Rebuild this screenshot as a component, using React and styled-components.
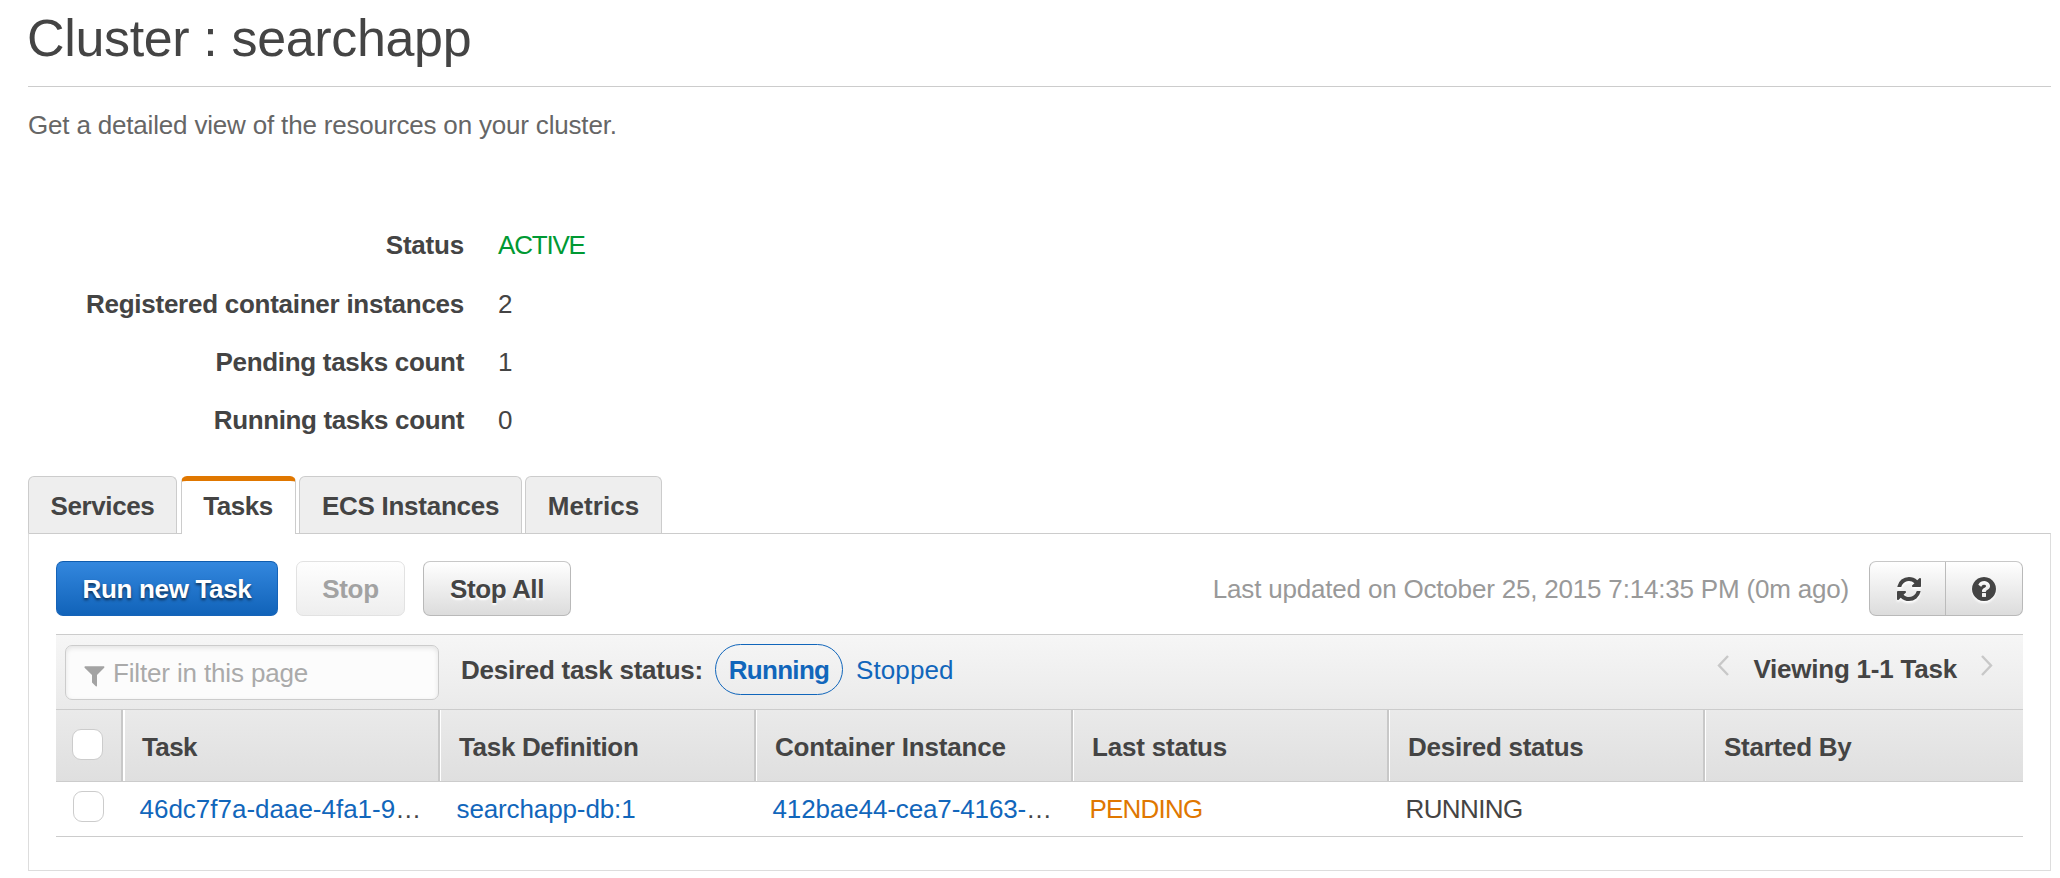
import React from 'react';
import styled, { createGlobalStyle, css } from 'styled-components';

const Global = createGlobalStyle`
  * { box-sizing: border-box; }
  body {
    margin: 0;
    background: #fff;
    color: #444;
    font: 26px/30px "Liberation Sans", Arial, sans-serif;
    white-space: nowrap;
  }
`;

const Page = styled.main`
  padding: 8px 9px 7px 28px;
`;

const Title = styled.h1`
  margin: 0;
  height: 79px;
  border-bottom: 1px solid #ccc;
  font-size: 52px;
  line-height: 60px;
  font-weight: 400;
  letter-spacing: -0.35px;
  text-indent: -1px;
`;

const Intro = styled.p`
  margin: 23px 0 0;
  color: #666;
  letter-spacing: -0.18px;
`;

const Details = styled.dl`
  display: grid;
  grid-template-columns: 436px 1fr;
  grid-template-rows: 59px 58px 58px 71px;
  column-gap: 34px;
  margin: 90px 0 0;
`;

const Label = styled.dt`
  font-weight: 700;
  text-align: right;
  letter-spacing: ${(p) => p.$ls}px;
`;

const Value = styled.dd`
  margin: 0;
  color: ${(p) => (p.$ok ? '#093' : '#444')};
  letter-spacing: ${(p) => (p.$ok ? '-1.2px' : 'normal')};
`;

const Tabs = styled.nav`
  display: flex;
  gap: 3px;
`;

const Tab = styled.div`
  width: ${(p) => p.$w}px;
  height: 57px;
  padding-top: 14px;
  border: 1px solid #ccc;
  border-bottom: 0;
  border-radius: 6px 6px 0 0;
  background: #eee;
  font-weight: 700;
  text-align: center;
  letter-spacing: ${(p) => p.$ls}px;
  ${(p) =>
    p.$active &&
    css`
      position: relative;
      height: 58px;
      margin: 0 0 -1px 1px;
      padding: 10px 1px 0 0;
      border-top: 5px solid #e07700;
      background: #fff;
    `}
`;

const Panel = styled.section`
  height: 338px;
  padding: 27px;
  border: 1px solid #ddd;
  border-top-color: #ccc;
`;

const Actions = styled.div`
  display: flex;
  align-items: flex-start;
  gap: 18px;
  margin-bottom: 18px;
`;

const variants = {
  primary: css`
    border-color: #1563b8;
    border-top-color: #0f5cae;
    background: linear-gradient(#3387de, #1163b9);
    color: #fff;
    text-shadow: 0 2px 3px rgba(0, 0, 0, 0.6);
  `,
  plain: css`
    border-color: #b9b9b9;
    border-top-color: #c8c8c8;
    background: linear-gradient(#fff, #dcdcdc);
    color: #444;
    text-shadow: 0 2px 2px #fff;
  `,
  disabled: css`
    border-color: #e2e2e2;
    background: linear-gradient(#fefefe, #eee);
    color: #a2a2a2;
  `,
};

const Button = styled.button`
  width: ${(p) => p.$w}px;
  height: 55px;
  padding: 12px 0 11px;
  border: 1px solid;
  border-radius: 7px;
  font: inherit;
  font-weight: 700;
  letter-spacing: ${(p) => p.$ls}px;
  ${(p) => variants[p.$variant]}
`;

const Updated = styled.span`
  margin: 13px 2px 0 auto;
  color: #999;
  letter-spacing: -0.19px;
`;

const IconGroup = styled.div`
  display: flex;
  width: 154px;
  height: 55px;
  border: 1px solid #b9b9b9;
  border-top-color: #c8c8c8;
  border-radius: 7px;
  background: linear-gradient(#fff, #dcdcdc);
`;

const IconButton = styled.button`
  width: 75px;
  display: flex;
  justify-content: center;
  padding: 15px 0 0 2px;
  border: 0;
  background: none;
  color: #444;
  & + & {
    width: 77px;
    padding-left: 0;
    border-left: 1px solid #bbb;
  }
  svg { filter: drop-shadow(0 2px 1px #fff); }
`;

const FilterBar = styled.div`
  display: flex;
  align-items: flex-start;
  height: 75px;
  padding-left: 9px;
  border-top: 1px solid #ccc;
  background: linear-gradient(#f6f6f6, #eaeaea);
`;

const FilterBox = styled.div`
  display: flex;
  width: 374px;
  height: 55px;
  margin-top: 10px;
  padding: 12px 0 0 18px;
  border: 1px solid #ccc;
  border-radius: 7px;
  background: #fcfcfc;
  box-shadow: inset 0 2px 5px rgba(0, 0, 0, 0.1);
  color: #aaa;
  letter-spacing: -0.15px;
  svg { margin: 8px 8px 0 0; }
`;

const StatusLabel = styled.span`
  width: 254px;
  margin: 20px 0 0 22px;
  font-weight: 700;
  letter-spacing: -0.26px;
`;

const Pill = styled.span`
  width: 128px;
  height: 51px;
  margin-top: 9px;
  padding-top: 10px;
  border: 1px solid #1166bb;
  border-radius: 26px;
  color: #1166bb;
  font-weight: 700;
  text-align: center;
  letter-spacing: -0.7px;
`;

const StatusLink = styled.span`
  margin: 20px 0 0 13px;
  color: #1166bb;
  letter-spacing: 0.1px;
`;

const Pager = styled.div`
  display: flex;
  gap: 24px;
  margin: 19px 30px 0 auto;
  font-weight: 700;
  letter-spacing: -0.22px;
  svg { margin-top: 1px; }
`;

const grid = css`
  display: grid;
  grid-template-columns: 67px 317px 316px 317px 316px 316px 1fr;
`;

const HeadRow = styled.div`
  ${grid}
  height: 73px;
  border: solid #ccc;
  border-width: 1px 0;
  background: linear-gradient(#eaeaea, #dfdfdf);
`;

const HeadCell = styled.div`
  padding: 22px 0 0 18px;
  border-left: 1px solid #fff;
  border-right: 2px solid #c8c8c8;
  font-weight: 700;
  letter-spacing: ${(p) => p.$ls}px;
  &:first-child { padding: 19px 0 0 16px; border-left: 0; }
  &:nth-child(2) { padding-left: 17px; border-left-width: 2px; }
  &:last-child { border-right: 0; }
`;

const Row = styled.div`
  ${grid}
  height: 55px;
  border-bottom: 1px solid #ccc;
`;

const Cell = styled.div`
  padding: 12px 0 0 16.5px;
  color: ${(p) => (p.$warn ? '#e07700' : '#444')};
  letter-spacing: ${(p) => p.$ls}px;
  &:first-child { padding: 9px 0 0 17px; }
`;

const Link = styled.span`
  color: #1166bb;
`;

const Check = styled.div`
  width: 31px;
  height: 31px;
  border: 1px solid #ccc;
  border-radius: 9px;
  background: #fff;
`;

const Chevron = ({ d }) => (
  <svg width="12" height="21" viewBox="0 0 12 21" fill="none" stroke="#c8c8c8" strokeWidth="2.4">
    <path d={d} />
  </svg>
);

const RefreshIcon = () => (
  <svg width="24" height="24" viewBox="0 0 1536 1536" fill="currentColor">
    <path d="M1511 928q0 5-1 7-64 268-268 434.5t-478 166.5q-146 0-282.5-55t-243.5-157l-129 129q-19 19-45 19t-45-19-19-45v-448q0-26 19-45t45-19h448q26 0 45 19t19 45-19 45l-137 137q71 66 161 102t187 36q134 0 250-65t186-179q11-17 53-117 8-23 30-23h192q13 0 22.5 9.5t9.5 22.5zm25-800v448q0 26-19 45t-45 19h-448q-26 0-45-19t-19-45 19-45l138-138q-148-137-349-137-134 0-250 65t-186 179q-11 17-53 117-8 23-30 23h-199q-13 0-22.5-9.5t-9.5-22.5v-7q65-268 270-434.5t480-166.5q146 0 284 55.5t245 156.5l130-129q19-19 45-19t45 19 19 45z" />
  </svg>
);

const HelpIcon = () => (
  <svg width="24" height="24" viewBox="128 128 1536 1536" fill="currentColor">
    <path d="M1024 1376v-192q0-14-9-23t-23-9h-192q-14 0-23 9t-9 23v192q0 14 9 23t23 9h192q14 0 23-9t9-23zm256-672q0-88-55.5-163t-138.5-116-170-41q-243 0-371 213-15 24 8 42l132 100q7 6 19 6 16 0 25-12 53-68 86-92 34-24 86-24 48 0 85.5 26t37.5 59q0 38-20 61t-68 45q-63 28-115.5 86.5t-52.5 125.5v36q0 14 9 23t23 9h192q14 0 23-9t9-23q0-19 21.5-49.5t54.5-49.5q32-18 49-28.5t46-35 44.5-48 28-60.5 12.5-81zm384 192q0 209-103 385.5t-279.5 279.5-385.5 103-385.5-103-279.5-279.5-103-385.5 103-385.5 279.5-279.5 385.5-103 385.5 103 279.5 279.5 103 385.5z" />
  </svg>
);

const FunnelIcon = () => (
  <svg width="21" height="21" viewBox="0 0 21 21" fill="#a3a3a3">
    <path d="M1 .3H20Q20.8.8 20.2 1.8L13 9V20Q12.6 20.8 11.8 20.2L8 16.500V9L.6 1.800Q0 .8 1 .3Z" />
  </svg>
);

const columns = [
  ['Task', -0.6],
  ['Task Definition', -0.33],
  ['Container Instance', -0.18],
  ['Last status', -0.2],
  ['Desired status', -0.26],
  ['Started By', -0.25],
];

export default function App() {
  return (
    <Page>
      <Global />
      <Title>Cluster : searchapp</Title>
      <Intro>Get a detailed view of the resources on your cluster.</Intro>

      <Details>
        <Label $ls={-0.2}>Status</Label>
        <Value $ok>ACTIVE</Value>
        <Label $ls={-0.26}>Registered container instances</Label>
        <Value>2</Value>
        <Label $ls={-0.3}>Pending tasks count</Label>
        <Value>1</Value>
        <Label $ls={-0.36}>Running tasks count</Label>
        <Value>0</Value>
      </Details>

      <Tabs>
        <Tab $w={149} $ls={-0.4}>Services</Tab>
        <Tab $w={115} $ls={-0.5} $active>Tasks</Tab>
        <Tab $w={223} $ls={-0.26}>ECS Instances</Tab>
        <Tab $w={137} $ls={0.1}>Metrics</Tab>
      </Tabs>

      <Panel>
        <Actions>
          <Button $variant="primary" $w={222} $ls={-0.33}>Run new Task</Button>
          <Button $variant="disabled" $w={109} $ls={-0.3}>Stop</Button>
          <Button $variant="plain" $w={148} $ls={-0.4}>Stop All</Button>
          <Updated>Last updated on October 25, 2015 7:14:35 PM (0m ago)</Updated>
          <IconGroup>
            <IconButton aria-label="Refresh"><RefreshIcon /></IconButton>
            <IconButton aria-label="Help"><HelpIcon /></IconButton>
          </IconGroup>
        </Actions>

        <FilterBar>
          <FilterBox><FunnelIcon />Filter in this page</FilterBox>
          <StatusLabel>Desired task status:</StatusLabel>
          <Pill>Running</Pill>
          <StatusLink>Stopped</StatusLink>
          <Pager>
            <Chevron d="M11 1L2 10.500L11 20" />
            Viewing 1-1 Task
            <Chevron d="M1 1L10 10.500L1 20" />
          </Pager>
        </FilterBar>

        <HeadRow>
          <HeadCell><Check /></HeadCell>
          {columns.map(([name, ls]) => (
            <HeadCell key={name} $ls={ls}>{name}</HeadCell>
          ))}
        </HeadRow>
        <Row>
          <Cell><Check /></Cell>
          <Cell $ls={-0.01}><Link>46dc7f7a-daae-4fa1-9</Link>…</Cell>
          <Cell $ls={-0.12}><Link>searchapp-db:1</Link></Cell>
          <Cell $ls={-0.12}><Link>412bae44-cea7-4163-</Link>…</Cell>
          <Cell $warn $ls={-0.8}>PENDING</Cell>
          <Cell $ls={-0.6}>RUNNING</Cell>
          <Cell />
        </Row>
      </Panel>
    </Page>
  );
}
